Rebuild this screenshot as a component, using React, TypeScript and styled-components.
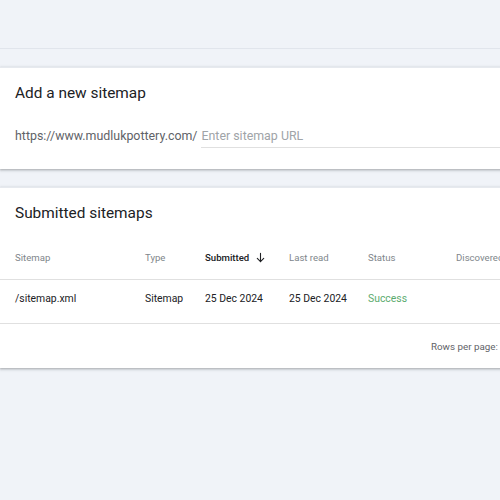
import React from "react";
import styled, { createGlobalStyle } from "styled-components";

const Global = createGlobalStyle`
  html, body { margin: 0; padding: 0; background: #f0f3f8; overflow: hidden; }
  body { font-family: Roboto, "Noto Sans", Arial, sans-serif; color: #202124; }
`;

const Page = styled.div`
  width: 500px;
  height: 500px;
  overflow: hidden;
  display: flex;
  flex-direction: column;
`;

const TopBar = styled.div`
  height: 48px;
  border-bottom: 1px solid #e1e5ec;
  flex-shrink: 0;
`;

const Stack = styled.div`
  display: flex;
  flex-direction: column;
  gap: 18px;
  padding-top: 18px;
`;

const Card = styled.section`
  width: 560px;
  background: #fff;
  border-top: 1px solid #e6e9ee;
  box-shadow: 0 1px 2px rgba(60, 64, 67, 0.3), 0 1px 3px 1px rgba(60, 64, 67, 0.12);
`;

const Title = styled.h2<{ $pt: number }>`
  margin: 0;
  padding: ${(p) => p.$pt}px 15px 0;
  font-size: 15.4px;
  font-weight: 400;
  line-height: 20px;
  color: #202124;
`;

const InputRow = styled.div`
  display: flex;
  align-items: flex-end;
  padding: 23px 0 21px 15px;
`;

const Prefix = styled.span`
  font-size: 12.4px;
  color: #5f6368;
  line-height: 20px;
  padding-bottom: 2px;
  margin-right: 4px;
`;

const Field = styled.input`
  flex: 1;
  border: none;
  border-bottom: 1px solid #e0e0e0;
  outline: none;
  padding: 0 0 1px;
  font-family: inherit;
  font-size: 12.4px;
  line-height: 20px;
  color: #202124;
  &::placeholder { color: #a0a4a8; }
`;

const Table = styled.div`
  margin-top: 12px;
`;

const Row = styled.div<{ $h: number; $pb?: number }>`
  display: grid;
  grid-template-columns: 130px 60px 84px 79px 88px 1fr;
  align-items: center;
  height: ${(p) => p.$h}px;
  box-sizing: border-box;
  padding-left: 15px;
  padding-bottom: ${(p) => p.$pb ?? 0}px;
  border-bottom: 1px solid #e0e0e0;
`;

const Th = styled.div<{ $active?: boolean }>`
  font-size: 9.6px;
  font-weight: ${(p) => (p.$active ? 500 : 400)};
  color: ${(p) => (p.$active ? "#202124" : "#80868b")};
  display: flex;
  align-items: center;
  gap: 6px;
  white-space: nowrap;
`;

const Td = styled.div<{ $ok?: boolean }>`
  font-size: 10.4px;
  color: ${(p) => (p.$ok ? "#5bab6e" : "#202124")};
  white-space: nowrap;
`;

const Footer = styled.div`
  height: 44px;
  display: flex;
  align-items: center;
  padding-left: 431px;
  font-size: 9.8px;
  color: #5f6368;
  white-space: nowrap;
`;

const Arrow = () => (
  <svg width="11" height="11" viewBox="0 0 24 24" fill="none" stroke="#202124" strokeWidth="2.4" strokeLinecap="round" strokeLinejoin="round">
    <path d="M12 3v18M5 14l7 7 7-7" />
  </svg>
);

export default function App() {
  return (
    <Page>
      <Global />
      <TopBar />
      <Stack>
        <Card>
          <Title $pt={15}>Add a new sitemap</Title>
          <InputRow>
            <Prefix>https://www.mudlukpottery.com/</Prefix>
            <Field placeholder="Enter sitemap URL" />
          </InputRow>
        </Card>
        <Card>
          <Title $pt={15}>Submitted sitemaps</Title>
          <Table>
            <Row $h={45}>
              <Th>Sitemap</Th>
              <Th>Type</Th>
              <Th $active>Submitted <Arrow /></Th>
              <Th>Last read</Th>
              <Th>Status</Th>
              <Th>Discovered pages</Th>
            </Row>
            <Row $h={44} $pb={7}>
              <Td>/sitemap.xml</Td>
              <Td>Sitemap</Td>
              <Td>25 Dec 2024</Td>
              <Td>25 Dec 2024</Td>
              <Td $ok>Success</Td>
              <Td></Td>
            </Row>
          </Table>
          <Footer>Rows per page: 10</Footer>
        </Card>
      </Stack>
    </Page>
  );
}
